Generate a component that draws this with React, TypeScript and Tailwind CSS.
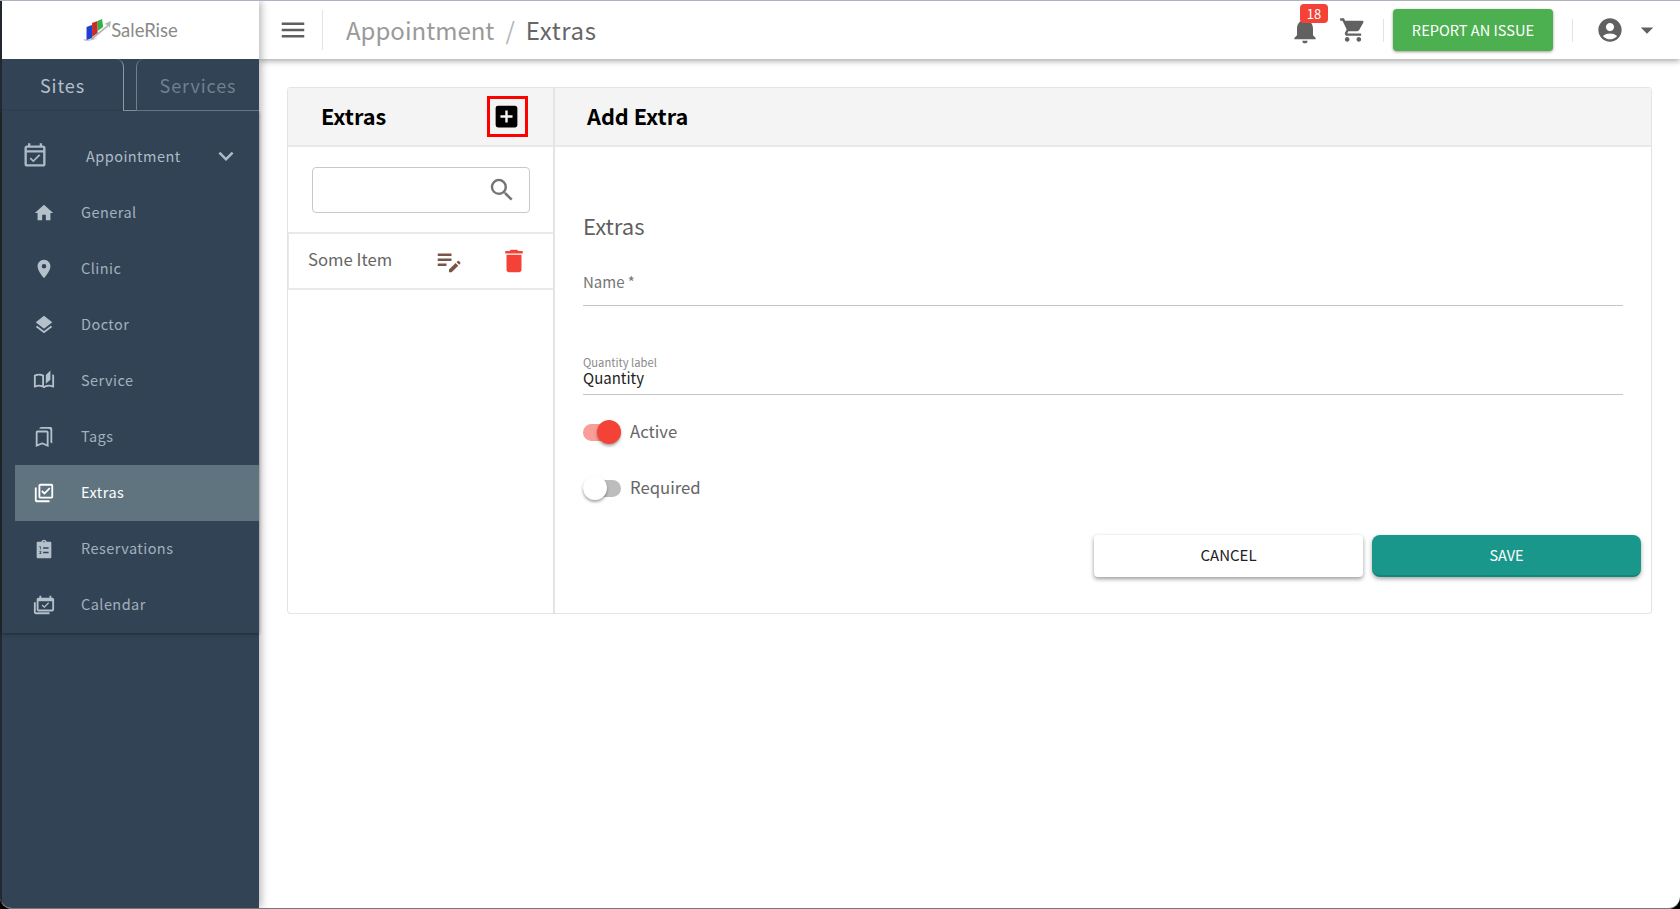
import { useState } from "react";
import {
  MdAccountCircle,
  MdAddBox,
  MdArrowDropDown,
  MdDelete,
  MdEditNote,
  MdExpandMore,
  MdHome,
  MdLayers,
  MdLocationOn,
  MdMenu,
  MdNotifications,
  MdOutlineAutoStories,
  MdOutlineBookmarks,
  MdOutlineEventAvailable,
  MdOutlineLibraryAddCheck,
  MdSearch,
  MdShoppingCart,
} from "react-icons/md";

function ReservationsIcon({ className }: { className?: string }) {
  return (
    <svg viewBox="0 0 24 24" className={className} fill="currentColor">
      <path d="M19 4h-4.2C14.4 2.8 13.3 2 12 2s-2.4.8-2.8 2H5c-.6 0-1 .4-1 1v16c0 .6.4 1 1 1h14c.6 0 1-.4 1-1V5c0-.6-.4-1-1-1zm-7-.6c.4 0 .8.3.8.8s-.4.8-.8.8-.8-.3-.8-.8.4-.8.8-.8z" />
      <path d="M7 9h1.4v3.6H7.6V10H7zM11 10h6v1.6h-6zM7 14.4h2.2v.9L8 16.6h1.3v.8H7v-.9l1.2-1.3H7zM11 15h6v1.6h-6z" fill="#324355" />
    </svg>
  );
}

function CalendarStackIcon({ className }: { className?: string }) {
  return (
    <svg viewBox="0 0 24 24" className={className} fill="currentColor">
      <path d="M3 9H1v11c0 1.1.9 2 2 2h15v-2H3z" />
      <path d="M21 4h-1V2h-2v2H9V2H7v2H6c-1.1 0-2 .9-2 2v11c0 1.1.9 2 2 2h15c1.1 0 2-.9 2-2V6c0-1.1-.9-2-2-2zm0 13H6V8h15z" />
      <path d="M12.3 15.4 9.4 12.5l1-1 1.9 1.9 4.3-4.3 1 1z" />
    </svg>
  );
}

function Logo() {
  return (
    <div className="flex items-center">
      <svg viewBox="0 0 28 24" preserveAspectRatio="none" className="h-[24px] w-[31px]">
        <path d="M2 21c2 1 8 1 14-2-4 3-9 4.500-13 3.500z" fill="#b5b5b5" />
        <path d="M5 22V9l5-2v13z" fill="#1f3fd0" />
        <path d="M10 19V5l5-2v12z" fill="#c92a2a" />
        <path d="M15 13V3l4-2 1 8z" fill="#2fb344" />
        <path d="M8 21 24 7l-3-1 6-3-1 7-1-2L11 21z" fill="#9a9a9a" opacity="0.75" />
      </svg>
      <span className="ml-[-1px] font-['Lato',sans-serif] text-[18.500px] leading-none text-[#8a8a8a]">SaleRise</span>
    </div>
  );
}

const menuItems = [
  { label: "General", Icon: MdHome },
  { label: "Clinic", Icon: MdLocationOn },
  { label: "Doctor", Icon: MdLayers },
  { label: "Service", Icon: MdOutlineAutoStories },
  { label: "Tags", Icon: MdOutlineBookmarks },
  { label: "Extras", Icon: MdOutlineLibraryAddCheck, active: true },
  { label: "Reservations", Icon: ReservationsIcon },
  { label: "Calendar", Icon: CalendarStackIcon },
];

function Sidebar() {
  return (
    <aside className="z-10 flex w-[259px] shrink-0 flex-col border-l-2 border-[#23272e] bg-[#324355] shadow-[2px_0_8px_rgba(0,0,0,0.3)]">
      <div className="flex h-[58px] shrink-0 items-center justify-center bg-white pr-[2px]">
        <Logo />
      </div>
      <div className="flex h-[52px] shrink-0 items-end">
        <div className="flex h-full w-[122px] items-center justify-center rounded-tr-[8px] border-r border-[#8b9aa8] text-[18px] tracking-[0.9px] text-[#b4bfc9]">
          Sites
        </div>
        <div className="h-full w-[12px] border-b border-[#8b9aa8]" />
        <div className="flex h-full flex-1 items-center justify-center rounded-tl-[8px] border-b border-l border-[#6f8090] pt-[1px] text-[18px] tracking-[0.9px] text-[#6f8090]">
          Services
        </div>
      </div>
      <div className="shadow-[0_1px_3px_rgba(0,0,0,0.4)]">
        <div className="flex h-[74px] items-center pt-[16px] pl-[19px] pr-[18px] text-[#aebbc6]">
          <MdOutlineEventAvailable className="h-[28px] w-[28px]" />
          <span className="ml-[37px] flex-1 text-[14.500px] tracking-[0.45px]">Appointment</span>
          <MdExpandMore className="h-[30px] w-[30px]" />
        </div>
        {menuItems.map(({ label, Icon, active }) => (
          <div
            key={label}
            className={`ml-[13px] flex h-[56px] items-center pl-[18px] text-[14.500px] tracking-[0.45px] ${
              active ? "bg-[#607480] text-white" : "text-[#a3b1bd]"
            }`}
          >
            <Icon className={`h-[22px] w-[22px] ${active ? "text-white" : "text-[#b4c0ca]"}`} />
            <span className="ml-[26px] pb-[2px]">{label}</span>
          </div>
        ))}
      </div>
    </aside>
  );
}

function Header() {
  return (
    <header className="z-[5] flex h-[58px] shrink-0 items-center bg-white pr-[18px] shadow-[0_2px_6px_rgba(0,0,0,0.35)]">
      <MdMenu className="ml-[19px] h-[30px] w-[30px] text-[#5f5f5f]" />
      <div className="ml-[14px] h-[40px] w-[1px] bg-[#e3e3e3]" />
      <div className="ml-[23px] flex items-center text-[24px]">
        <span className="text-[#9a9a9a]">Appointment</span>
        <span className="mx-[11px] text-[#b5b5b5]">/</span>
        <span className="tracking-[0.6px] text-[#666666]">Extras</span>
      </div>
      <div className="ml-auto flex items-center">
        <div className="relative">
          <MdNotifications className="h-[32px] w-[32px] text-[#616161]" />
          <span className="absolute left-[11px] top-[-10px] flex h-[19px] w-[28px] items-center justify-center rounded-[4px] bg-[#f44336] text-[13px] text-white">
            18
          </span>
        </div>
        <MdShoppingCart className="ml-[18px] h-[28px] w-[28px] text-[#616161]" />
        <div className="ml-[16px] h-[23px] w-[1px] bg-[#e3e3e3]" />
        <button className="ml-[9px] h-[42px] w-[160px] rounded-[4px] bg-[#4caf50] text-[14.600px] text-white shadow-[0_1px_3px_rgba(0,0,0,0.4)]">
          REPORT AN ISSUE
        </button>
        <div className="ml-[19px] h-[23px] w-[1px] bg-[#e3e3e3]" />
        <MdAccountCircle className="ml-[23px] h-[28px] w-[28px] text-[#616161]" />
        <MdArrowDropDown className="ml-[8px] h-[30px] w-[30px] text-[#616161]" />
      </div>
    </header>
  );
}

function ExtrasList() {
  return (
    <section className="flex w-[268px] shrink-0 flex-col rounded-l-[4px] border border-r-2 border-[#e4e4e4]">
      <div className="flex h-[59px] shrink-0 items-center border-b-2 border-[#e9e9e9] bg-[#f4f4f4] pl-[33px] pr-[25px]">
        <h2 className="flex-1 pb-[1px] text-[21.700px] font-bold text-black">Extras</h2>
        <div className="flex h-[41px] w-[41px] items-center justify-center border-[3px] border-[#ff0000]">
          <MdAddBox className="mr-[2px] h-[29px] w-[29px] shrink-0 text-black" />
        </div>
      </div>
      <div className="pl-[24px] pr-[23px] pt-[20px] pb-[19px]">
        <div className="flex h-[46px] items-center justify-end rounded-[4px] border border-[#c8c8c8] pr-[12px]">
          <MdSearch className="h-[30px] w-[30px] text-[#757575]" />
        </div>
      </div>
      <div className="flex h-[58px] items-center border-y-2 border-l border-[#e9e9e9] pl-[19px] text-[16.700px] text-[#666666]">
        <span className="w-[126px] pb-[2px]">Some Item</span>
        <MdEditNote className="h-[30px] w-[30px] text-[#795548]" />
        <MdDelete className="ml-[35px] h-[30px] w-[30px] text-[#f44336]" />
      </div>
    </section>
  );
}

function Toggle({ label, defaultOn }: { label: string; defaultOn?: boolean }) {
  const [on, setOn] = useState(!!defaultOn);
  return (
    <div className="flex h-[56px] items-center">
      <button
        onClick={() => setOn(!on)}
        className={`relative h-[17px] w-[38px] rounded-full ${on ? "bg-[#f99d97]" : "bg-[#bdbdbd]"}`}
      >
        <span
          className={`absolute top-[-4px] h-[24px] w-[24px] rounded-full shadow-[0_2px_3px_rgba(0,0,0,0.35)] ${
            on ? "right-0 bg-[#f44336]" : "left-0 bg-white"
          }`}
        />
      </button>
      <span className="ml-[9px] text-[16.700px] text-[#666666]">{label}</span>
    </div>
  );
}

function AddExtraForm() {
  return (
    <section className="flex flex-1 flex-col rounded-r-[4px] border border-l-0 border-[#e4e4e4]">
      <div className="flex h-[59px] shrink-0 items-center border-b-2 border-[#e9e9e9] bg-[#f4f4f4] pl-[32px]">
        <h2 className="pb-[1px] text-[21.700px] font-bold text-black">Add Extra</h2>
      </div>
      <div className="flex flex-1 flex-col pl-[28px] pr-[28px] pt-[62px]">
        <h3 className="text-[22px] leading-[32px] text-[#5f5f5f]">Extras</h3>
        <div className="mt-[29px] h-[36px] border-b border-[#c4c4c4] text-[15px] leading-[24px] text-[#757575]">Name *</div>
        <div className="mt-[48px] h-[41px] border-b border-[#c4c4c4]">
          <div className="text-[11.200px] leading-[16px] text-[#8a8a8a]">Quantity label</div>
          <div className="text-[15px] leading-[16px] text-[#222222]">Quantity</div>
        </div>
        <div className="mt-[9px]">
          <Toggle label="Active" defaultOn />
          <Toggle label="Required" />
        </div>
        <div className="mr-[-18px] mt-[19px] flex justify-end gap-[9px]">
          <button className="h-[42px] w-[269px] rounded-[4px] bg-white pb-[2px] text-[15px] text-[#222222] shadow-[0_2px_4px_rgba(0,0,0,0.4)]">
            CANCEL
          </button>
          <button className="h-[42px] w-[269px] rounded-[8px] border-b-[2px] border-[#14857a] bg-[#19978a] text-[14.500px] text-white shadow-[0_2px_4px_rgba(0,0,0,0.35)]">
            SAVE
          </button>
        </div>
      </div>
    </section>
  );
}

export default function App() {
  return (
    <div className="h-[909px] w-[1680px] bg-black">
      <div className="flex h-full overflow-hidden rounded-b-[12px] border-y border-t-[#aeb2c0] border-b-[#777777] bg-white font-['Noto_Sans_CJK_JP','Noto_Sans',sans-serif]">
        <Sidebar />
        <div className="flex min-w-0 flex-1 flex-col">
          <Header />
          <main className="flex-1 pl-[28px] pr-[28px] pt-[28px]">
            <div className="flex h-[527px]">
              <ExtrasList />
              <AddExtraForm />
            </div>
          </main>
        </div>
      </div>
    </div>
  );
}
